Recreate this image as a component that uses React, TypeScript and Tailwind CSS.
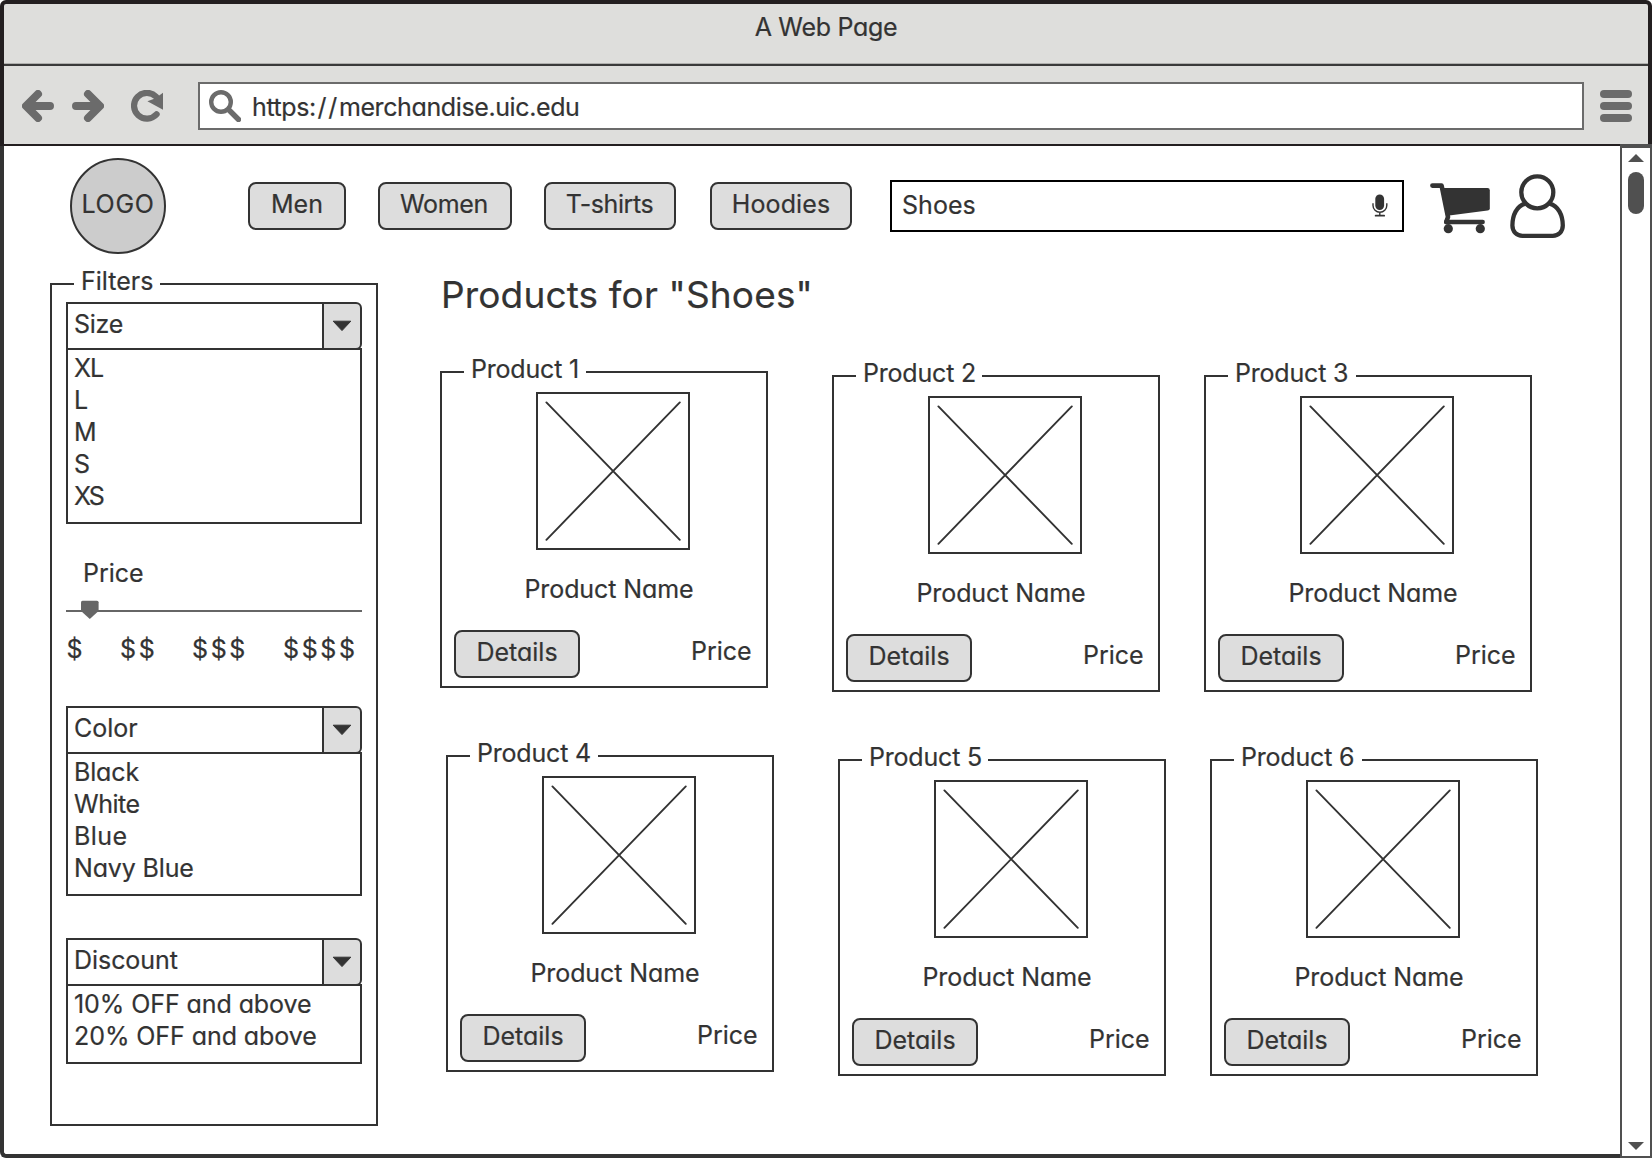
import type { ReactNode } from "react";

function BackIcon({ className = "" }: { className?: string }) {
  return (
    <svg viewBox="0 0 32 32" className={`size-8 shrink-0 ${className}`} fill="none" stroke="#6b6b6b" strokeWidth="8" strokeLinecap="round" strokeLinejoin="round">
      <path d="M28 16H5M16 4L4 16L16 28" />
    </svg>
  );
}

function ReloadIcon({ className = "" }: { className?: string }) {
  return (
    <svg viewBox="0 0 32 32" className={`size-8 shrink-0 ${className}`} fill="none">
      <path d="M25.6 24.3A12.9 12.9 0 1 1 25 6.6" stroke="#6b6b6b" strokeWidth="6.2" strokeLinecap="round" />
      <path d="M32.2 2.6V19.8L16.4 11.2L24 8.4Z" fill="#6b6b6b" />
    </svg>
  );
}

function SearchIcon() {
  return (
    <svg viewBox="0 0 32 32" className="ml-[9px] mt-[6px] size-8 shrink-0" fill="none" stroke="#6b6b6b">
      <circle cx="12" cy="12" r="9.8" strokeWidth="4.4" />
      <path d="M20.5 20.5L29.5 29.5" strokeWidth="5.4" strokeLinecap="round" />
    </svg>
  );
}

function MenuIcon() {
  return (
    <div className="ml-4 mt-6 flex w-8 flex-col gap-1">
      <div className="h-2 rounded-full bg-[#6b6b6b]" />
      <div className="h-2 rounded-full bg-[#6b6b6b]" />
      <div className="h-2 rounded-full bg-[#6b6b6b]" />
    </div>
  );
}

function MicIcon() {
  return (
    <svg viewBox="0 0 20 26" className="mr-3 mt-[10px] h-[26px] w-5 shrink-0" fill="none" stroke="#333">
      <rect x="5.3" y="2.4" width="8.8" height="15.6" rx="4.4" fill="#333" stroke="none" />
      <path d="M3 11.2v2.2a6.8 6.8 0 0 0 13.8 0v-2.2M9.8 20.2v3.6" strokeWidth="1.4" />
      <path d="M5.6 23.7h8.6" strokeWidth="1.7" strokeLinecap="round" />
    </svg>
  );
}

function CartIcon() {
  return (
    <svg viewBox="0 0 60 54" className="ml-[26px] mt-9 h-[54px] w-[60px] shrink-0" fill="none" stroke="#333" strokeLinecap="round" strokeLinejoin="round">
      <path d="M2.4 3.6H11.6L18 35L16.2 40" strokeWidth="4.6" />
      <path d="M12.6 6H57.5Q59.8 6 59.8 8.3V26.2Q59.8 28.3 57.6 28.6L19.2 33.6L16 33Z" fill="#333" stroke="none" />
      <path d="M16.2 40H52.7" strokeWidth="4.4" />
      <circle cx="18.3" cy="46.7" r="4.6" fill="#333" stroke="none" />
      <circle cx="50.3" cy="46.7" r="4.6" fill="#333" stroke="none" />
    </svg>
  );
}

function UserIcon() {
  return (
    <svg viewBox="0 0 60 68" className="ml-[18px] mt-[26px] h-[68px] w-[60px] shrink-0" fill="none" stroke="#333" strokeWidth="4.3">
      <circle cx="29.3" cy="20.3" r="16" />
      <path d="M17.2 31.6C8.6 34 4.4 43.2 4.4 53.6C4.4 59.8 8.8 63.8 14.4 63.8H44.8C50.4 63.8 54.8 59.8 54.8 53.6C54.8 43.2 50.4 34 41.6 31.6" />
    </svg>
  );
}

function NavButton({ className, children }: { className: string; children: ReactNode }) {
  return (
    <button className={`h-12 shrink-0 rounded-lg border-2 border-[#333] bg-[#ddd] pb-1 ${className}`}>{children}</button>
  );
}

function Select({ label, className, labelClass = "" }: { label: string; className: string; labelClass?: string }) {
  return (
    <div className={`flex h-12 w-[296px] ${className}`}>
      <div className="w-64 border-2 border-r-0 border-[#333] pl-[6px] pt-[2px]">
        <span className={`block leading-9 ${labelClass}`}>{label}</span>
      </div>
      <div className="flex w-10 justify-center rounded-r-md border-2 border-[#333] bg-[#ddd] pt-4">
        <svg viewBox="0 0 20 12" className="h-3 w-5">
          <path d="M1.2 1.2H18.8L10 10.6Z" fill="#333" stroke="#333" strokeLinejoin="round" />
        </svg>
      </div>
    </div>
  );
}

function OptionList({ items, className }: { items: { text: string; track?: string }[]; className: string }) {
  return (
    <ul className={`-mt-[2px] ml-[14px] w-[296px] border-2 border-[#333] pl-[6px] pt-[2px] ${className}`}>
      {items.map((item) => (
        <li key={item.text} className={item.track ?? ""}>{item.text}</li>
      ))}
    </ul>
  );
}

function Group({ title, legendClass, className, children }: { title: string; legendClass: string; className: string; children: ReactNode }) {
  return (
    <section className={`relative w-[328px] shrink-0 border-2 border-[#333] ${className}`}>
      <h2 className={`absolute left-[22px] whitespace-nowrap bg-white pl-[7px] ${legendClass}`}>{title}</h2>
      {children}
    </section>
  );
}

function ProductCard({ n, className = "", legendClass }: { n: number; className?: string; legendClass: string }) {
  return (
    <Group title={`Product ${n}`} legendClass={`-top-5 ${legendClass}`} className={`h-[317px] ${className}`}>
      <div className="ml-[94px] mt-[19px] h-[158px] w-[154px] border-2 border-[#333]">
        <svg viewBox="0 0 150 154" className="h-full w-full" stroke="#333" strokeWidth="1.9" strokeLinecap="round">
          <path d="M8.4 8.4L141.8 145.8M141.8 8.4L8.4 145.8" />
        </svg>
      </div>
      <p className="ml-[82.5px] mt-[23px] tracking-[-0.1px]">Product Name</p>
      <div className="mt-[25px] flex">
        <NavButton className="ml-3 w-[126px]">Details</NavButton>
        <span className="ml-[111px] mt-[5px]">Price</span>
      </div>
    </Group>
  );
}

export default function App() {
  return (
    <div className="flex h-[1158px] w-[1652px] flex-col overflow-hidden bg-white font-[Inter,sans-serif] text-[25px] leading-8 text-[#333] [-webkit-text-stroke:0.2px_#333] [font-feature-settings:'cv11']">
      <header className="h-[146px] shrink-0 rounded-t-md border-x-4 border-b-2 border-t-4 border-[#231f20] bg-[#dededc]">
        <div className="h-[59px] pt-[7px] text-center tracking-[-0.3px]">A Web Page</div>
        <div className="h-[3px] border-b-2 border-t border-b-[#3a3a3a] border-t-[#b0b0ae]" />
        <div className="flex">
          <BackIcon className="ml-[18px] mt-6" />
          <BackIcon className="ml-[18px] mt-6 rotate-180" />
          <ReloadIcon className="ml-[27px] mt-6" />
          <div className="ml-[35px] mt-4 flex h-12 w-[1386px] border-2 border-[#6b6b6b] bg-white">
            <SearchIcon />
            <span className="ml-[11px] mt-[7px] tracking-[-0.39px]">
              https<span className="tracking-[1.2px]">:</span><span className="tracking-[1.7px]">//</span>merchandise.uic.edu
            </span>
          </div>
          <MenuIcon />
        </div>
      </header>

      <div className="flex h-[1012px]">
        <main className="w-[1620px] rounded-bl-md border-b-4 border-l-4 border-[#333]">
          <nav className="flex h-[108px] items-start">
            <div className="ml-[66px] mt-3 flex size-24 shrink-0 justify-center rounded-full border-2 border-[#333] bg-[#ccc] pt-7 tracking-[0.7px]">
              LOGO
            </div>
            <NavButton className="ml-[82px] mt-9 w-[98px]">Men</NavButton>
            <NavButton className="ml-8 mt-9 w-[134px] pr-[2px] tracking-[-0.3px]">Women</NavButton>
            <NavButton className="ml-8 mt-9 w-[132px] pr-px tracking-[-0.42px]">T-shirts</NavButton>
            <NavButton className="ml-[34px] mt-9 w-[142px] tracking-[0.1px]">Hoodies</NavButton>
            <div className="ml-[38px] mt-[34px] flex h-[52px] w-[514px] shrink-0 justify-between border-2 border-black">
              <span className="ml-[10px] mt-[7px] tracking-[0.05px]">Shoes</span>
              <MicIcon />
            </div>
            <CartIcon />
            <UserIcon />
          </nav>

          <div className="flex">
            <Group title="Filters" legendClass="-top-5 w-[86px]" className="ml-[46px] mt-[29px] h-[843px]">
              <Select label="Size" className="ml-[14px] mt-[17px]" labelClass="tracking-[-0.3px]" />
              <OptionList
                className="h-44"
                items={[{ text: "XL", track: "tracking-[-1px]" }, { text: "L" }, { text: "M" }, { text: "S" }, { text: "XS", track: "tracking-[-2px]" }]}
              />

              <p className="ml-[31px] mt-[33px]">Price</p>
              <svg viewBox="0 0 296 20" className="ml-[14px] mt-[11px] h-5 w-[296px]">
                <path d="M0 11H296" stroke="#666" strokeWidth="2" />
                <path d="M15 2.2Q15 .7 16.5 .7H31Q32.6 .7 32.6 2.2V11L23.8 18.9L15 11Z" fill="#666" />
              </svg>
              <div className="ml-[14.5px] mt-[13px] flex tracking-[2.6px]">
                <span className="w-[53.5px]">$</span>
                <span className="w-[72px]">$$</span>
                <span className="w-[91px]">$$$</span>
                <span>$$$$</span>
              </div>

              <Select label="Color" className="ml-[14px] mt-[41px]" />
              <OptionList
                className="h-36"
                items={[
                  { text: "Black", track: "tracking-[-0.15px]" },
                  { text: "White", track: "tracking-[-0.5px]" },
                  { text: "Blue", track: "tracking-[0.4px]" },
                  { text: "Navy Blue", track: "tracking-[-0.15px]" },
                ]}
              />

              <Select label="Discount" className="ml-[14px] mt-[42px]" labelClass="tracking-[-0.05px]" />
              <OptionList
                className="h-20"
                items={[
                  { text: "10% OFF and above", track: "tracking-[-0.08px]" },
                  { text: "20% OFF and above", track: "tracking-[-0.07px]" },
                ]}
              />
            </Group>

            <div className="ml-[62px]">
              <h1 className="ml-px mt-[17px] text-[37px] leading-[48px] tracking-[0.15px]">Products for "Shoes"</h1>
              <div className="mt-[52px] flex items-start">
                <ProductCard n={1} legendClass="w-[122px] tracking-[-0.2px]" />
                <ProductCard n={2} legendClass="w-[126px] tracking-[-0.2px]" className="ml-16 mt-1" />
                <ProductCard n={3} legendClass="w-[128px] tracking-[-0.2px]" className="ml-11 mt-1" />
              </div>
              <div className="ml-[6px] mt-[63px] flex items-start">
                <ProductCard n={4} legendClass="w-[128px] tracking-[-0.2px]" />
                <ProductCard n={5} legendClass="w-[126px] tracking-[-0.2px]" className="ml-16 mt-1" />
                <ProductCard n={6} legendClass="w-[128px] tracking-[-0.2px]" className="ml-11 mt-1" />
              </div>
            </div>
          </div>
        </main>

        <aside className="-mt-[2px] flex w-8 flex-col items-center border-x-2 border-b-2 border-t-4 border-[#505050] bg-white">
          <svg viewBox="0 0 16 8" className="mt-[6px] h-2 w-4 shrink-0">
            <path d="M0 8L8 0L16 8Z" fill="#505050" />
          </svg>
          <div className="mt-[10px] h-[42px] w-4 shrink-0 rounded-full bg-[#505050]" />
          <svg viewBox="0 0 16 8" className="mb-[6px] mt-auto h-2 w-4 shrink-0">
            <path d="M0 0L8 8L16 0Z" fill="#505050" />
          </svg>
        </aside>
      </div>
    </div>
  );
}
